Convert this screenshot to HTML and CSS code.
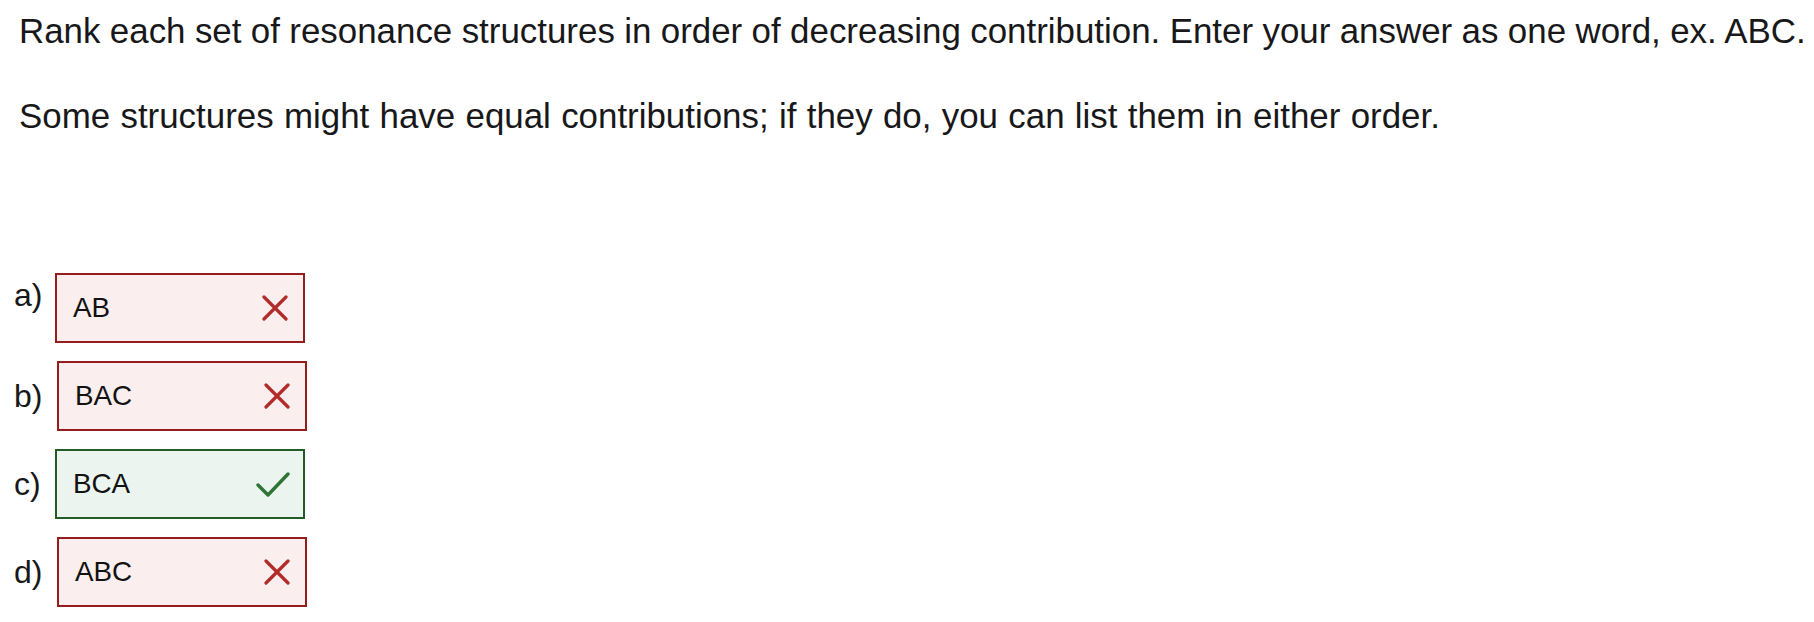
FILE: index.html
```html
<!DOCTYPE html>
<html lang="en">
<head>
<meta charset="utf-8">
<title>Resonance ranking</title>
<link rel="stylesheet" href="styles.css">
</head>
<body>
<main class="question">
  <p class="prompt prompt-first">Rank each set of resonance structures in order of decreasing contribution. Enter your answer as one word, ex. ABC.</p>
  <p class="prompt prompt-second">Some structures might have equal contributions; if they do, you can list them in either order.</p>

  <ol class="answers">
    <li class="answer-row row-raised">
      <span class="label">a)</span>
      <div class="answer-box wrong">
        <span class="answer-text">AB</span>
        <svg class="icon icon-x" width="26" height="26" viewBox="0 0 26 26" aria-hidden="true"><path d="M2 2 L24 24 M24 2 L2 24"/></svg>
      </div>
    </li>
    <li class="answer-row shifted">
      <span class="label">b)</span>
      <div class="answer-box wrong">
        <span class="answer-text">BAC</span>
        <svg class="icon icon-x" width="26" height="26" viewBox="0 0 26 26" aria-hidden="true"><path d="M2 2 L24 24 M24 2 L2 24"/></svg>
      </div>
    </li>
    <li class="answer-row">
      <span class="label">c)</span>
      <div class="answer-box right">
        <span class="answer-text">BCA</span>
        <svg class="icon icon-check" width="34" height="27" viewBox="0 0 34 27" aria-hidden="true"><path d="M2 14 L12 24 L32 3"/></svg>
      </div>
    </li>
    <li class="answer-row shifted">
      <span class="label">d)</span>
      <div class="answer-box wrong">
        <span class="answer-text">ABC</span>
        <svg class="icon icon-x" width="26" height="26" viewBox="0 0 26 26" aria-hidden="true"><path d="M2 2 L24 24 M24 2 L2 24"/></svg>
      </div>
    </li>
  </ol>
</main>
</body>
</html>
```

FILE: styles.css
```css
html, body {
  margin: 0;
  padding: 0;
  background: #ffffff;
}

body {
  font-family: "Liberation Sans", Arial, Helvetica, sans-serif;
  color: #18181a;
}

.question {
  padding: 11px 0 0 19px;
}

.prompt {
  margin: 0;
  font-size: 34.9px;
  line-height: 40px;
  white-space: nowrap;
}

.prompt-first {
  word-spacing: -0.3px;
}

.prompt-second {
  margin-top: 45px;
  word-spacing: 0.6px;
}

.answers {
  list-style: none;
  margin: 137px 0 0 0;
  padding: 0;
  display: flex;
  flex-direction: column;
  gap: 18px;
}

.answer-row {
  display: flex;
  align-items: center;
  margin-left: -5px;
}

.label {
  font-size: 32px;
  line-height: 40px;
  width: 41px;
  flex: none;
}

.shifted .label {
  width: 43px;
}

.row-raised {
  align-items: flex-start;
}

.row-raised .label {
  margin-top: 2px;
}

.answer-box {
  box-sizing: border-box;
  width: 250px;
  height: 70px;
  border: 2px solid;
  display: flex;
  align-items: center;
  justify-content: space-between;
  padding: 0 15px 0 16px;
}

.answer-text {
  font-size: 27.8px;
  line-height: 32px;
  color: #121212;
}

.wrong {
  border-color: #951d1d;
  background: #faeeee;
}

.right {
  border-color: #245c26;
  background: #ebf4ee;
}

.icon {
  flex: none;
  fill: none;
  stroke-linecap: round;
  stroke-linejoin: round;
}

.icon-x {
  stroke: #b12b2b;
  stroke-width: 3.2;
}

.icon-check {
  stroke: #2e7436;
  stroke-width: 3.4;
  margin-right: -2px;
}
```
